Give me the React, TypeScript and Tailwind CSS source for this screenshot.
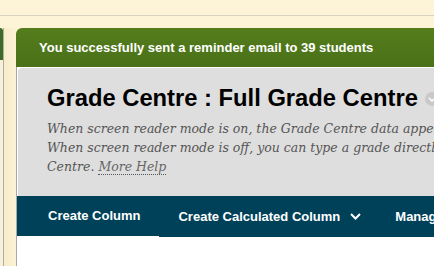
export default function App() {
  return (
    <div className="w-[434px] h-[266px] overflow-hidden bg-[#fdf3d6] font-['Liberation_Sans',Arial,sans-serif]">
      {/* top strip */}
      <div className="h-[15px]" />
      <div className="h-px bg-[#d9d3c1]" />

      <div className="flex pt-[12px] h-[250px]">
        {/* left panel edge */}
        <div className="w-[4px] shrink-0 border-r border-[#b3ad9c] bg-[#f6f0dc]">
          <div className="h-[32px] bg-[#3b6a2a] rounded-tr-[3px]" />
        </div>
        <div className="w-[12px] shrink-0 bg-gradient-to-r from-[#f7edcb] to-[#fcf2d4]" />

        {/* main content */}
        <div className="w-[520px] shrink-0 flex flex-col">
          <div className="h-[39px] shrink-0 rounded-tl-[6px] bg-gradient-to-b from-[#547d1d] to-[#4a7117] pl-[23px] flex items-center text-[13px] font-bold text-white whitespace-nowrap">
            You successfully sent a reminder email to 39 students
          </div>

          <div className="flex-1 flex flex-col border-l border-[#a8a8a8] bg-white">
            <div className="bg-[#dedede] border-t border-l border-white rounded-tl-[5px] pl-[29px] pt-[16px] pb-[20px]">
              <div className="flex items-center gap-[7px] whitespace-nowrap">
                <h1 className="text-[23.75px] font-bold text-black leading-[28px]">Grade Centre : Full Grade Centre</h1>
                <span className="w-[14px] h-[14px] rounded-full bg-[#c9c9c9] flex items-center justify-center mt-[2px]">
                  <svg width="8" height="5" viewBox="0 0 8 5" fill="none">
                    <path d="M1 1l3 3 3-3" stroke="white" strokeWidth="1.5" />
                  </svg>
                </span>
              </div>
              <div className="mt-[7px] font-['DejaVu_Serif',Georgia,serif] italic text-[12.5px] leading-[19px] text-[#555555] whitespace-nowrap">
                <p>When screen reader mode is on, the Grade Centre data appears in an accessible table.</p>
                <p>When screen reader mode is off, you can type a grade directly in a cell in the Grade</p>
                <p>
                  Centre.{" "}
                  <a className="text-[#666666] border-b border-dotted border-[#555555]">More Help</a>
                </p>
              </div>
            </div>

            <nav className="h-[41px] shrink-0 bg-[#00415a] flex items-stretch text-[13px] font-bold text-white whitespace-nowrap">
              <div className="pl-[31px] pr-[19px] flex items-center border-b border-white">Create Column</div>
              <div className="pl-[19px] pr-[34px] flex items-center gap-[10px]">
                Create Calculated Column
                <svg width="11" height="7" viewBox="0 0 11 7" fill="none">
                  <path d="M1 1l4.5 4.5L10 1" stroke="white" strokeWidth="2" />
                </svg>
              </div>
              <div className="flex items-center">Manage</div>
            </nav>

            <div className="flex-1 bg-white" />
          </div>
        </div>
      </div>
    </div>
  );
}
